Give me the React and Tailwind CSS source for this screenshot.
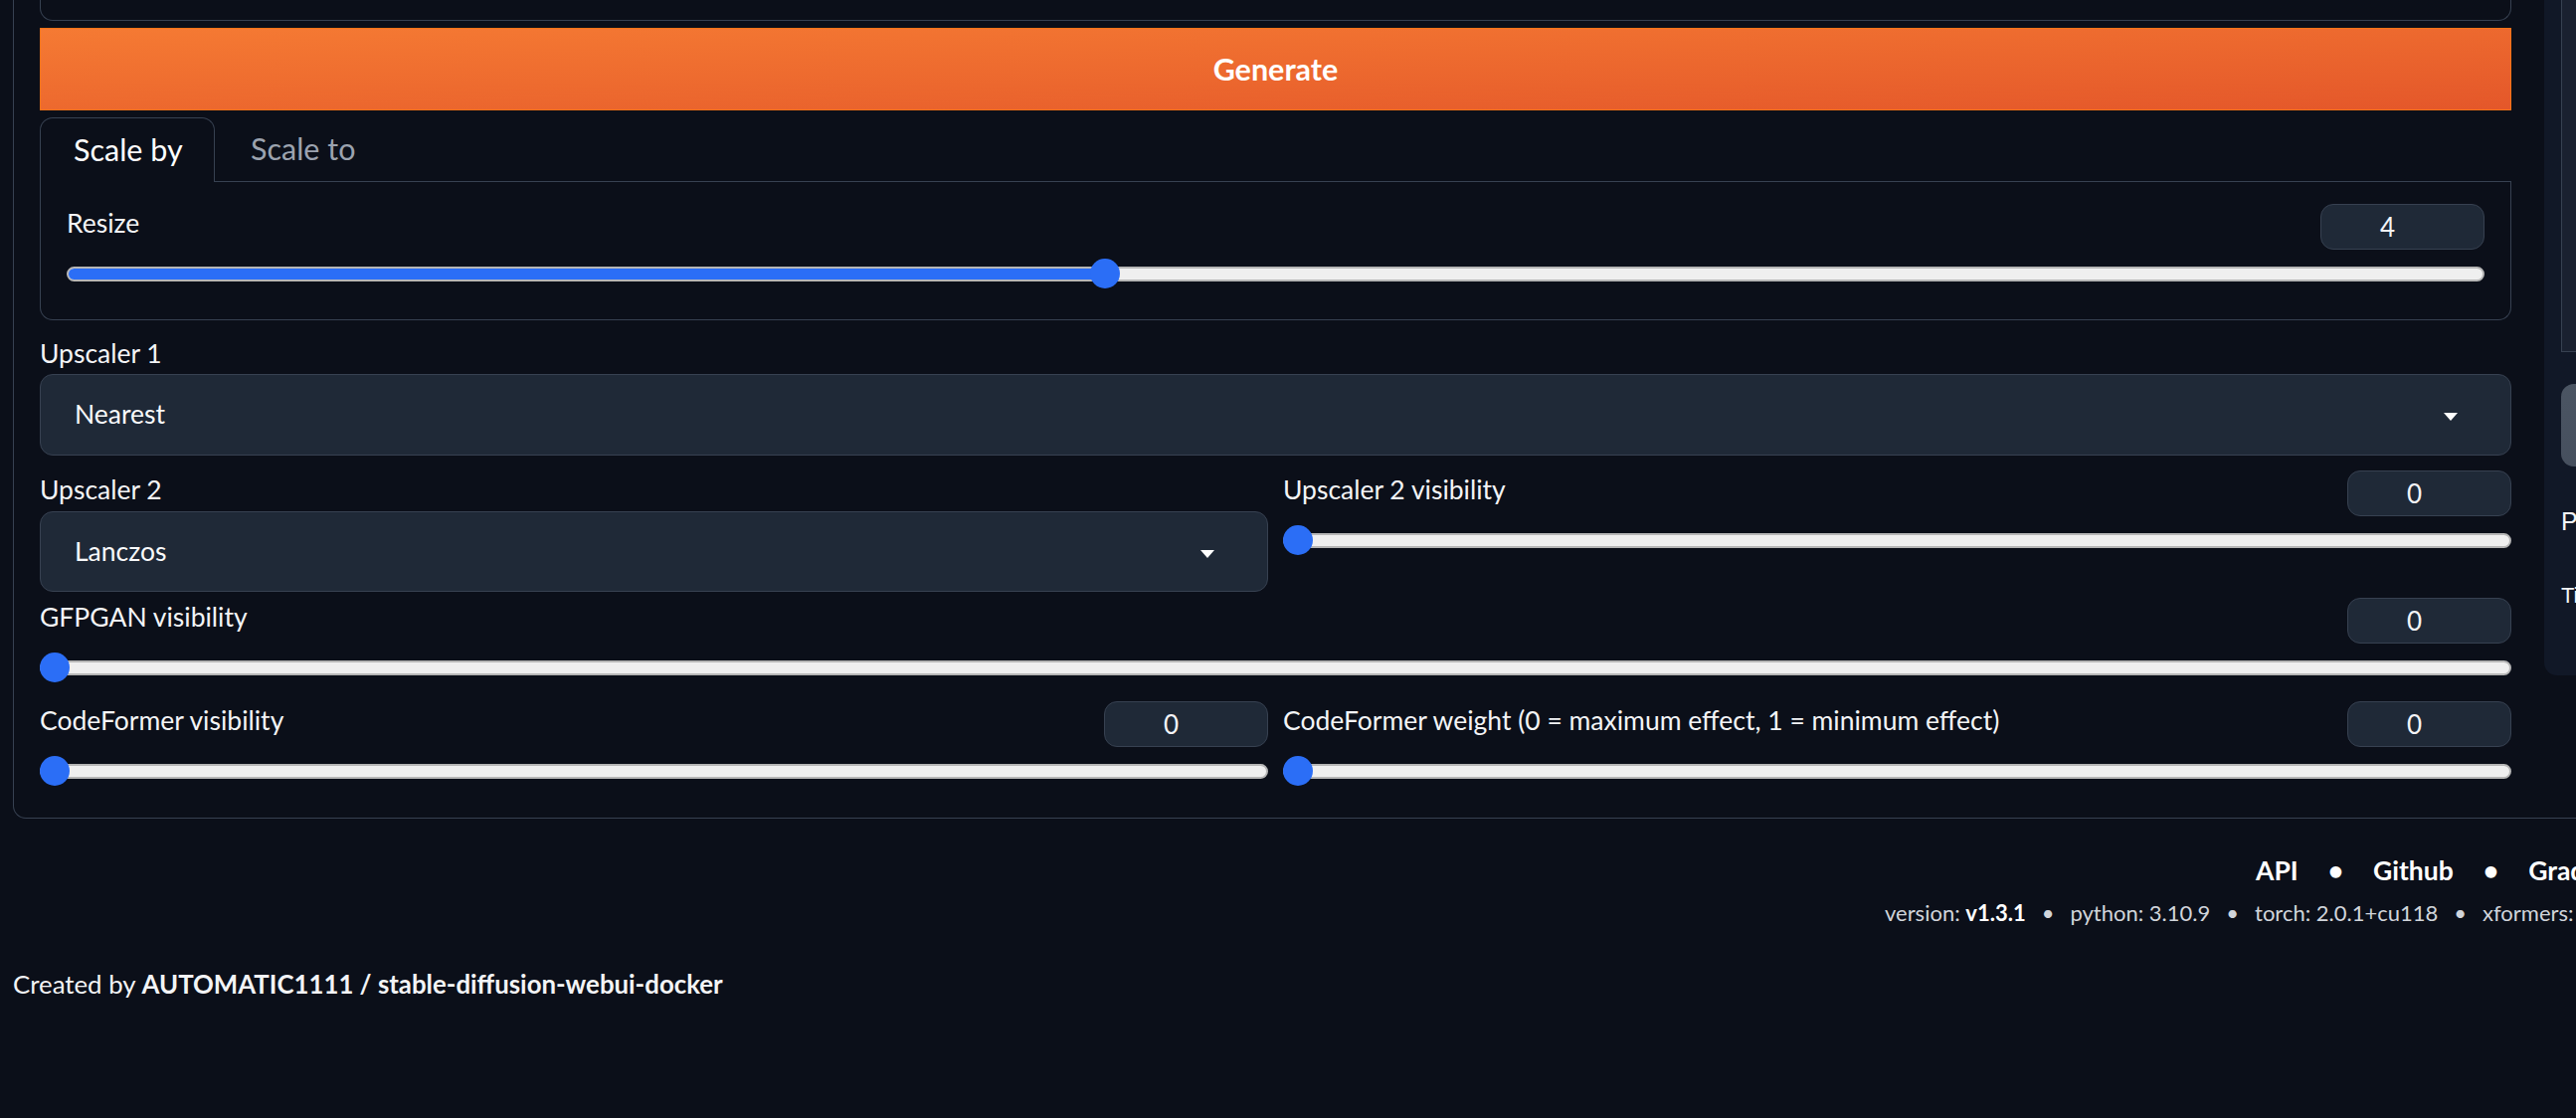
import React from "react";

const BORDER = "border-[#374151]";

function NumberBox({ value }) {
  return (
    <div className="w-[165px] h-[46px] shrink-0 rounded-[13px] bg-[#1f2937] border border-[#374151] flex items-center justify-center pr-[30px] text-[26px] text-[#f3f4f6]">
      {value}
    </div>
  );
}

function Slider({ pct = 0, fill = false }) {
  return (
    <div className="relative h-[30px] mt-[9px] flex items-center">
      <div className="relative h-[15px] w-full rounded-full bg-[#efefef] border-2 border-[#b6b6b6] overflow-hidden">
        {fill && (
          <div
            className="absolute left-0 top-[-2px] bottom-[-2px] bg-[#2b6ef6]"
            style={{ width: `calc(${pct * 100}% - ${pct * 30}px + 15px)` }}
          />
        )}
      </div>
      <div
        className="absolute top-0 w-[30px] h-[30px] rounded-full bg-[#2b6ef6]"
        style={{ left: `calc(${pct * 100}% - ${pct * 30}px)` }}
      />
    </div>
  );
}

function SliderField({ label, value, pct = 0, fill = false }) {
  return (
    <div>
      <div className="flex justify-between items-start h-[46px]">
        <div className="mt-[2px] h-[34px] leading-[34px] text-[26.5px] text-[#f3f4f6] whitespace-nowrap">
          {label}
        </div>
        <NumberBox value={value} />
      </div>
      <Slider pct={pct} fill={fill} />
    </div>
  );
}

function Arrow() {
  return (
    <svg width="14" height="8" viewBox="0 0 14 8" className="mt-[4px]">
      <polygon points="0,0 14,0 7,8" fill="#ffffff" />
    </svg>
  );
}

function Dropdown({ label, value, first }) {
  return (
    <div>
      <div className={`${first ? "mt-[16px]" : "mt-[2px]"} h-[34px] leading-[34px] text-[26.5px] text-[#f3f4f6]`}>
        {label}
      </div>
      <div
        className={`${first ? "mt-[4px] h-[82px]" : "mt-[5px] h-[81px]"} rounded-[13px] bg-[#1f2937] border border-[#374151] flex items-center justify-between pl-[34px] pr-[53px]`}
      >
        <span className="text-[26.5px] text-[#f9fafb]">{value}</span>
        <Arrow />
      </div>
    </div>
  );
}

export default function App() {
  return (
    <div className="w-full h-screen overflow-hidden bg-[#0b0f19] text-[#f3f4f6] font-['Lato',sans-serif]">
      {/* outer panel */}
      <div className={`ml-[13px] w-[2700px] border-x border-b ${BORDER} rounded-b-[13px] pl-[26px] pb-[32px] flex items-start gap-[33px]`}>
        {/* left column */}
        <div className="w-[2485px] shrink-0">
          <div className={`h-[21px] border-x border-b ${BORDER} rounded-b-[13px]`} />

          <button className="mt-[7px] w-full h-[83px] bg-linear-to-br from-[#f57a33] to-[#e4572a] border border-[#f97316] text-white font-bold text-[30.5px] flex items-center justify-center">
            Generate
          </button>

          {/* tabs */}
          <div className="mt-[7px] flex h-[65px]">
            <div className={`w-[176px] h-full border-x border-t ${BORDER} rounded-t-[13px] pl-[33px] flex items-center text-[30.5px] text-white`}>
              Scale by
            </div>
            <div className={`h-full border-b ${BORDER} pl-[36px] pr-[20px] flex items-center text-[30.5px] text-[#9ca3af]`}>
              Scale to
            </div>
            <div className={`flex-1 h-full border-b ${BORDER}`} />
          </div>
          <div className={`border-x border-b ${BORDER} rounded-b-[13px] px-[26px] pt-[22px] pb-[31px]`}>
            <SliderField label="Resize" value="4" pct={3 / 7} fill />
          </div>

          <Dropdown label="Upscaler 1" value="Nearest" first />

          <div className="mt-[15px] grid grid-cols-2 gap-[15px] items-start">
            <Dropdown label="Upscaler 2" value="Lanczos" />
            <SliderField label="Upscaler 2 visibility" value="0" />
          </div>

          <div className="mt-[6px]">
            <SliderField label="GFPGAN visibility" value="0" />
          </div>

          <div className="mt-[19px] grid grid-cols-2 gap-[15px]">
            <SliderField label="CodeFormer visibility" value="0" />
            <SliderField label="CodeFormer weight (0 = maximum effect, 1 = minimum effect)" value="0" />
          </div>
        </div>

        {/* right column */}
        <div className="w-[400px] shrink-0 bg-[#111827] rounded-b-[13px] pl-[17px] pb-[60px] font-['Liberation_Sans',Arial,sans-serif]">
          <div className={`h-[354px] border-x border-b ${BORDER} bg-[#1a2130]`} />
          <div className="mt-[32px] h-[83px] rounded-[13px] bg-linear-to-br from-[#4b5563] to-[#414a59]" />
          <div className="mt-[35px] h-[40px] leading-[40px] text-[25px] text-[#f3f4f6] whitespace-nowrap">Postprocess</div>
          <div className="mt-[35px] h-[40px] leading-[40px] text-[22px] text-[#f3f4f6] whitespace-nowrap">Time taken: 0.52s</div>
        </div>
      </div>

      {/* footer */}
      <div className="mt-[33px] h-[40px] pl-[2268px] flex items-center gap-[30px] whitespace-nowrap font-bold text-[26.5px] text-white">
        <span>API</span>
        <span>•</span>
        <span>Github</span>
        <span>•</span>
        <span>Gradio</span>
        <span>•</span>
        <span>Reload UI</span>
      </div>
      <div className="mt-[4px] h-[34px] pl-[1895px] flex items-center gap-[16px] whitespace-nowrap text-[22px] text-[#d1d5db]">
        <span>
          version: <b className="font-bold text-white">v1.3.1</b>
        </span>
        <span>•</span>
        <span>python: 3.10.9</span>
        <span>•</span>
        <span>torch: 2.0.1+cu118</span>
        <span>•</span>
        <span>xformers: N/A</span>
        <span>•</span>
        <span>gradio: 3.32.0</span>
      </div>
      <div className="mt-[35px] h-[40px] leading-[40px] pl-[13px] text-[25.8px] text-[#f3f4f6] whitespace-nowrap">
        Created by <b className="font-bold">AUTOMATIC1111 / stable-diffusion-webui-docker</b>
      </div>
    </div>
  );
}
